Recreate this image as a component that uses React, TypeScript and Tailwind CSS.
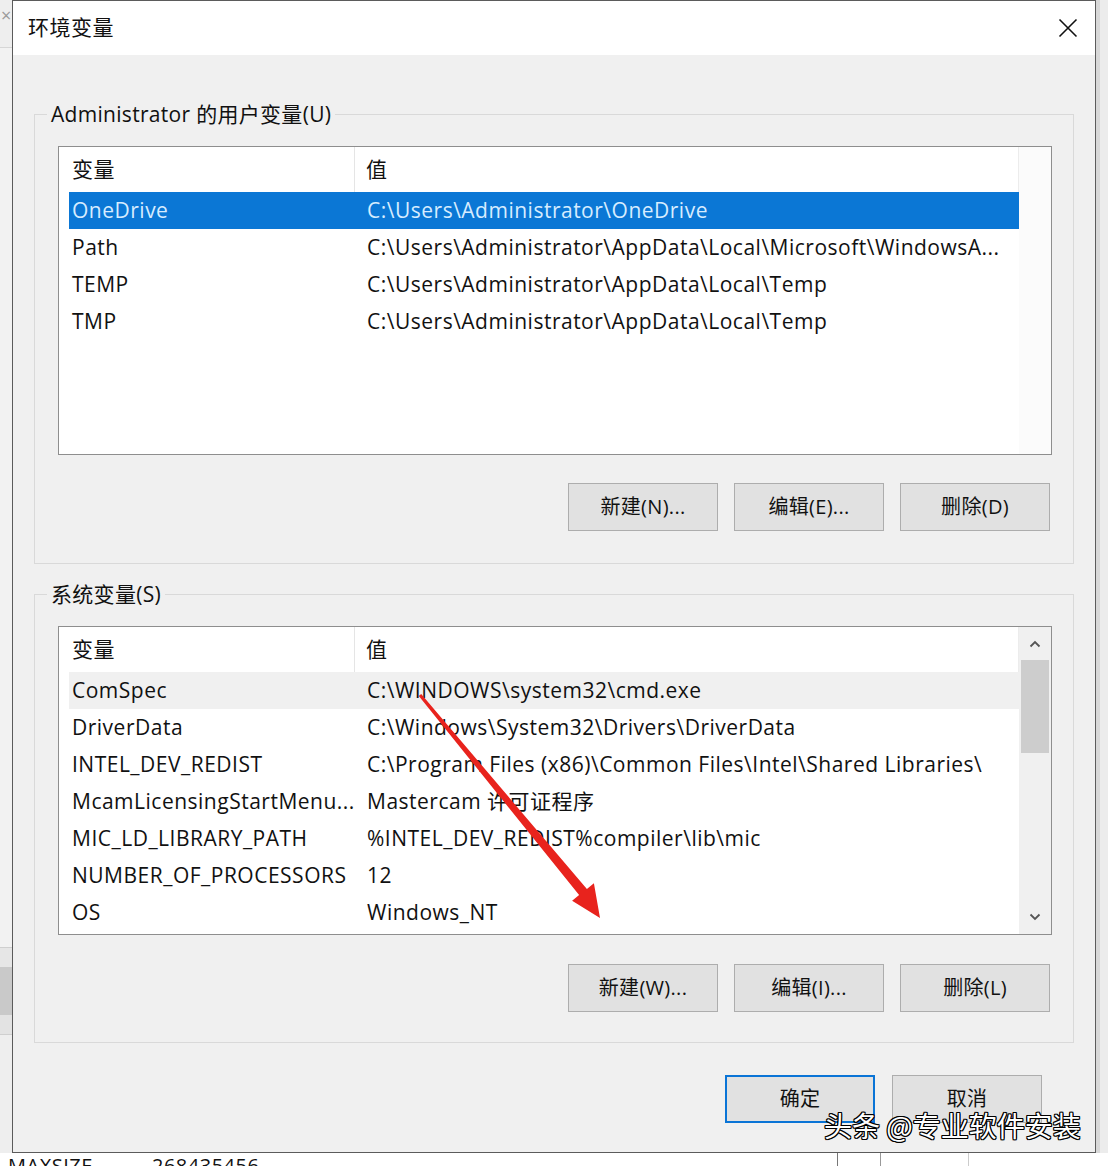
import React from "react"

type Row = {
    name: string
    value: string
}

const userRows: Row[] = [
    { name: "OneDrive", value: "C:\\Users\\Administrator\\OneDrive" },
    { name: "Path", value: "C:\\Users\\Administrator\\AppData\\Local\\Microsoft\\WindowsA..." },
    { name: "TEMP", value: "C:\\Users\\Administrator\\AppData\\Local\\Temp" },
    { name: "TMP", value: "C:\\Users\\Administrator\\AppData\\Local\\Temp" }
]

const systemRows: Row[] = [
    { name: "ComSpec", value: "C:\\WINDOWS\\system32\\cmd.exe" },
    { name: "DriverData", value: "C:\\Windows\\System32\\Drivers\\DriverData" },
    { name: "INTEL_DEV_REDIST", value: "C:\\Program Files (x86)\\Common Files\\Intel\\Shared Libraries\\" },
    { name: "McamLicensingStartMenu...", value: "Mastercam 许可证程序" },
    { name: "MIC_LD_LIBRARY_PATH", value: "%INTEL_DEV_REDIST%compiler\\lib\\mic" },
    { name: "NUMBER_OF_PROCESSORS", value: "12" },
    { name: "OS", value: "Windows_NT" }
]

function WinButton({
    children,
    primary = false
}: {
    children: React.ReactNode
    primary?: boolean
}) {

    return (
        <button
            className={
                primary
                    ? "flex h-[48px] w-[150px] items-center justify-center border-2 border-[#0a74d6] bg-[#e1e1e1] text-[20px] tracking-[0.3px] text-[#111]"
                    : "flex h-[48px] w-[150px] items-center justify-center border border-[#adadad] bg-[#e1e1e1] text-[20px] tracking-[0.3px] text-[#111]"
            }
        >
            {children}
        </button>
    )
}

function ListRow({
    row,
    tone
}: {
    row: Row
    tone: "none" | "selected" | "hover"
}) {

    const styles = {
        none: "bg-transparent text-[#111]",
        selected: "bg-[#0b77d5] text-[#d6ecff]",
        hover: "bg-[#f0f0f0] text-[#111]"
    }

    return (
        <div
            className={`
                flex
                h-[37px]
                items-center
                whitespace-nowrap
                ${styles[tone]}
            `}
        >
            <div className="w-[286px] overflow-hidden pl-[3px]">
                {row.name}
            </div>
            <div className="flex-1 overflow-hidden pl-[12px]">
                {row.value}
            </div>
        </div>
    )
}

function Chevron({ up }: { up: boolean }) {

    return (
        <svg width="12" height="8" viewBox="0 0 12 8">
            <path
                d={up ? "M1.5 6.5 L6 2 L10.5 6.5" : "M1.5 1.5 L6 6 L10.5 1.5"}
                fill="none"
                stroke="#555"
                strokeWidth="1.8"
            />
        </svg>
    )
}

function VarList({
    rows,
    selectedIndex,
    hoverIndex,
    scroll
}: {
    rows: Row[]
    selectedIndex: number
    hoverIndex: number
    scroll: boolean
}) {

    return (
        <div className="flex h-[309px] border border-[#8e8e8e] bg-white">

            <div className="flex w-[960px] flex-col">

                <div className="flex h-[45px] pl-[10px]">
                    <div className="flex w-[286px] items-center border-r border-[#e5e5e5] pl-[3px]">
                        变量
                    </div>
                    <div className="flex flex-1 items-center border-r border-[#ececec] pl-[11px]">
                        值
                    </div>
                </div>

                <div className="pl-[10px]">
                    {rows.map((row, i) => (
                        <ListRow
                            key={row.name}
                            row={row}
                            tone={
                                i === selectedIndex
                                    ? "selected"
                                    : i === hoverIndex
                                        ? "hover"
                                        : "none"
                            }
                        />
                    ))}
                </div>

            </div>

            {scroll ? (
                <div className="flex flex-1 flex-col items-stretch bg-[#f0f0f0]">
                    <div className="flex h-[33px] items-center justify-center">
                        <Chevron up />
                    </div>
                    <div className="mx-[2px] h-[93px] bg-[#cdcdcd]" />
                    <div className="flex-1" />
                    <div className="flex h-[34px] items-center justify-center">
                        <Chevron up={false} />
                    </div>
                </div>
            ) : (
                <div className="flex-1 bg-[#fbfbfb]" />
            )}

        </div>
    )
}

function GroupBox({
    title,
    children,
    className
}: {
    title: string
    children: React.ReactNode
    className: string
}) {

    return (
        <fieldset className={`border border-[#d9d9d9] ${className}`}>
            <legend className="ml-[12px] px-[4px] leading-[28px] tracking-[0.3px] text-[#111]">
                {title}
            </legend>
            {children}
        </fieldset>
    )
}

export default function App() {

    return (
        <div
            className="
                relative
                h-[1166px]
                w-[1108px]
                overflow-hidden
                bg-[#f7f7f7]
                font-['Open_Sans','Noto_Sans_CJK_SC',sans-serif]
                text-[21px]
                tracking-[0.5px]
                text-[#111]
            "
        >

            <div className="flex h-[1153px]">

                {/* window behind, left edge */}
                <div className="flex w-[12px] flex-col bg-[#eeeeee]">
                    <div className="h-[30px] pl-[1px] text-[18px] leading-[30px] text-[#9a9a9a]">
                        ×
                    </div>
                    <div className="h-[17px]" />
                    <div className="h-[900px] border-t border-[#d6d6d6] bg-[#f2f2f2]" />
                    <div className="h-[20px] border-t border-[#cfcfcf] bg-[#e6e6e6]" />
                    <div className="h-[48px] bg-[#c9c9c9]" />
                    <div className="h-[20px] border-b border-[#cfcfcf] bg-[#e3e3e3]" />
                    <div className="h-[70px] overflow-hidden pt-[74px] text-[20px] leading-[24px] text-[#222]">
                        on
                    </div>
                </div>

                {/* dialog */}
                <div className="flex w-[1084px] flex-col border border-[#5b5b5b] bg-[#f0f0f0]">

                    <div className="flex h-[54px] items-center justify-between bg-white pl-[15px] pr-[17px]">
                        <span className="text-[#111]">
                            环境变量
                        </span>
                        <svg width="20" height="20" viewBox="0 0 20 20">
                            <path
                                d="M1.5 1.5 L18.5 18.5 M18.5 1.5 L1.5 18.5"
                                stroke="#111"
                                strokeWidth="1.6"
                                fill="none"
                            />
                        </svg>
                    </div>

                    <div className="flex flex-col px-[21px]">

                        <GroupBox
                            title="Administrator 的用户变量(U)"
                            className="mt-[45px] pb-[32px]"
                        >
                            <div className="ml-[23px] mr-[21px] mt-[18px]">
                                <VarList
                                    rows={userRows}
                                    selectedIndex={0}
                                    hoverIndex={-1}
                                    scroll={false}
                                />
                            </div>
                            <div className="mr-[23px] mt-[28px] flex justify-end gap-[16px]">
                                <WinButton>新建(N)...</WinButton>
                                <WinButton>编辑(E)...</WinButton>
                                <WinButton>删除(D)</WinButton>
                            </div>
                        </GroupBox>

                        <GroupBox
                            title="系统变量(S)"
                            className="mt-[16px] pb-[30px]"
                        >
                            <div className="ml-[23px] mr-[21px] mt-[18px]">
                                <VarList
                                    rows={systemRows}
                                    selectedIndex={-1}
                                    hoverIndex={0}
                                    scroll
                                />
                            </div>
                            <div className="mr-[23px] mt-[29px] flex justify-end gap-[16px]">
                                <WinButton>新建(W)...</WinButton>
                                <WinButton>编辑(I)...</WinButton>
                                <WinButton>删除(L)</WinButton>
                            </div>
                        </GroupBox>

                        <div className="mt-[32px] flex justify-end gap-[17px] pr-[32px]">
                            <WinButton primary>确定</WinButton>
                            <WinButton>取消</WinButton>
                        </div>

                    </div>
                </div>

                {/* window behind, right edge */}
                <div className="flex flex-1">
                    <div className="w-[4px] bg-[#d8d8d8]" />
                    <div className="flex-1 bg-[#ececec]" />
                </div>

            </div>

            {/* table behind the dialog, bottom edge */}
            <div className="flex h-[13px] overflow-hidden bg-white text-[20px] leading-[26px] text-[#111]">
                <div className="w-[152px] pl-[8px]">MAXSIZE</div>
                <div className="w-[685px]">268435456</div>
                <div className="w-[43px] border-l border-[#777]" />
                <div className="w-[88px] border-l border-[#999]" />
                <div className="flex-1 border-l border-[#ccc]" />
            </div>

            {/* red annotation arrow */}
            <svg
                className="pointer-events-none absolute left-0 top-0"
                width="1108"
                height="1166"
                viewBox="0 0 1108 1166"
            >
                <polygon
                    points="421.2,694.1 586.9,888.9 593.9,883.2 600,918 572.1,900.8 579.1,895.1 418.8,695.9"
                    fill="#e8231d"
                />
            </svg>

            {/* watermark */}
            <div
                className="
                    absolute
                    left-[824px]
                    top-[1106px]
                    whitespace-nowrap
                    font-['Noto_Sans_CJK_SC',sans-serif]
                    text-[28px]
                    leading-[38px]
                    tracking-normal
                    text-white
                    [text-shadow:1px_1px_0_#000,-1px_-1px_0_#000,1px_-1px_0_#000,-1px_1px_0_#000,0_1px_0_#000,0_-1px_0_#000,1px_0_0_#000,-1px_0_0_#000]
                "
            >
                头条 @专业软件安装
            </div>

        </div>
    )
}
